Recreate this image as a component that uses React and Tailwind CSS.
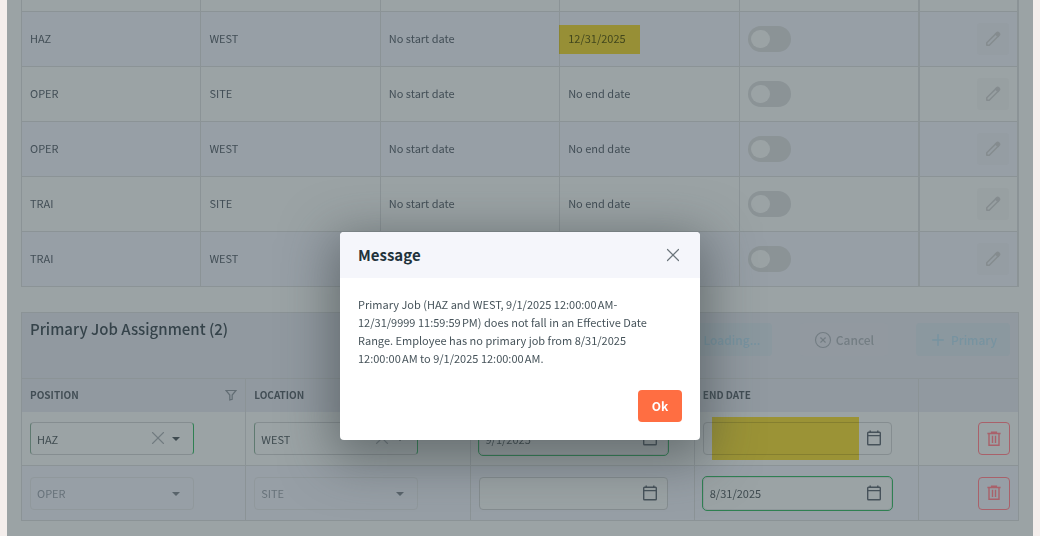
import { X, Plus, CircleX } from 'lucide-react';

const cellFont = "font-['Noto_Sans_CJK_SC','Noto_Sans',sans-serif]";

const jobs = [
  { position: 'HAZ', location: 'WEST', end: '12/31/2025', marked: true },
  { position: 'OPER', location: 'SITE', end: 'No end date' },
  { position: 'OPER', location: 'WEST', end: 'No end date' },
  { position: 'TRAI', location: 'SITE', end: 'No end date' },
  { position: 'TRAI', location: 'WEST', end: 'No end date' },
];

const PencilIcon = () => (
  <svg className="h-4 w-4" viewBox="0 0 16 16" fill="none" stroke="currentColor" strokeWidth="1.5" strokeLinejoin="round">
    <path d="M1.8 14.2v-2.4L11 2.6l2.4 2.4-9.2 9.2z" />
    <path d="M10.6 3l2.4 2.4 1.1-1.1a1.5 1.5 0 0 0 0-2.1l-.3-.3a1.5 1.5 0 0 0-2.1 0z" fill="currentColor" />
  </svg>
);

const CalendarIcon = () => (
  <svg className="h-4 w-4" viewBox="0 0 16 16" fill="none" stroke="currentColor" strokeWidth="1.4">
    <rect x="1.7" y="2.2" width="12.6" height="12.6" rx="0.8" />
    <path d="M1.2 5.6h13.6M4.2 0.4v1.8M11.8 0.4v1.8" />
  </svg>
);

const TrashIcon = () => (
  <svg className="h-4 w-4" viewBox="0 0 16 16" fill="none" stroke="currentColor" strokeWidth="1.4">
    <path d="M1.4 2.5h13.2M5.6 2.2V1.1h4.8v1.1M3 2.8v11.4h10V2.8M6.5 4.8v7.2M9.5 4.8v7.2" />
  </svg>
);

const FilterIcon = () => (
  <svg className="h-3 w-3" viewBox="0 0 12 12" fill="none" stroke="currentColor" strokeWidth="1.2">
    <path d="M1 1.5h10L7.2 6v4.2l-2.4.8V6z" />
  </svg>
);

const Caret = () => (
  <svg className="h-1 w-2" viewBox="0 0 8 4" fill="currentColor">
    <path d="M0 0h8L4 4z" />
  </svg>
);

const Combo = ({ label, value, active }) => (
  <div className="relative w-[164px]">
    <select
      aria-label={label}
      disabled={!active}
      className={
        active
          ? 'block h-[33px] w-full appearance-none rounded border border-y-[#858d90] border-l-[#5f7a70] border-r-[#2f8052] px-1.5 text-[#3f4b50]'
          : 'block h-[33px] w-full appearance-none rounded border border-[#90989c] px-1.5 text-[#67727a] opacity-100'
      }
    >
      <option>{value}</option>
    </select>
    {active && (
      <button aria-label={`Clear ${label}`} className="absolute top-[5px] right-[25px] text-[#717b80]">
        <X className="h-[22px] w-[22px]" strokeWidth={1.2} />
      </button>
    )}
    <span className={active ? 'absolute top-[15px] right-3.5 text-[#3f4b50]' : 'absolute top-[15px] right-3.5 text-[#59646b]'}>
      <Caret />
    </span>
  </div>
);

const DateBox = ({ label, value, active, marked }) => (
  <div className="relative w-[189px]">
    <input
      type="text"
      aria-label={label}
      defaultValue={value}
      className={
        active
          ? 'block h-[33px] w-full rounded border border-[#8f989b] bg-[#9ba3a5] px-1.5 text-[#3f4b50] outline outline-[#2f8052]'
          : 'block h-[33px] w-full rounded border border-[#858d90] bg-[#9ba3a5] px-1.5 text-[#3f4b50]'
      }
    />
    <button aria-label={`Pick ${label}`} className="absolute top-2 right-2.5 text-[#46525a]">
      <CalendarIcon />
    </button>
    {marked && <div className="absolute -top-[5px] left-[9px] h-[43px] w-[147px] bg-[#ffe653] mix-blend-multiply" />}
  </div>
);

const DeleteButton = () => (
  <button aria-label="Delete" className="ml-auto flex h-[33px] w-8 items-center justify-center rounded border border-[#a9616a] text-[#a9616a]">
    <TrashIcon />
  </button>
);

const JobsTable = () => (
  <table className="w-full table-fixed border-separate border-spacing-0">
    <colgroup>
      <col />
      <col />
      <col />
      <col />
      <col />
      <col className="w-[101px]" />
    </colgroup>
    <tbody>
      <tr className="h-3 [&>td]:border-b [&>td]:border-l [&>td]:border-[#8b9396]">
        <td />
        <td />
        <td />
        <td />
        <td />
        <td className="border-r-2 border-l-2!" />
      </tr>
      {jobs.map((job, i) => (
        <tr
          key={i}
          className="h-[55px] even:bg-[#979fa6] [&>td]:border-b [&>td]:border-l [&>td]:border-[#8b9396] [&>td]:px-2"
        >
          <td className="pb-0.5">{job.position}</td>
          <td className="pb-0.5">{job.location}</td>
          <td className="pb-0.5">No start date</td>
          <td className="relative pb-0.5">
            {job.end}
            {job.marked && (
              <div className="absolute top-[13px] -left-px h-[29px] w-[81px] bg-[#ffe653] mix-blend-multiply" />
            )}
          </td>
          <td>
            <input
              type="checkbox"
              aria-label={`Primary ${job.position} ${job.location}`}
              className="block h-[26px] w-[43px] appearance-none rounded-full bg-[#8b9396] p-[3px] pt-1 before:block before:h-[18px] before:w-[19px] before:rounded-full before:bg-[#9ba3a5]"
            />
          </td>
          <td className="border-r-2 border-l-2!">
            <button aria-label="Edit" className="ml-auto flex h-8 w-8 items-center justify-center rounded bg-[#8b9396]/15 text-[#858c8f]">
              <PencilIcon />
            </button>
          </td>
        </tr>
      ))}
    </tbody>
  </table>
);

const PrimaryTable = () => (
  <table className="w-full table-fixed border-separate border-spacing-0">
    <colgroup>
      <col />
      <col />
      <col />
      <col />
      <col className="w-[101px]" />
    </colgroup>
    <thead>
      <tr className="h-[33px] bg-[#9199a0] text-left text-[10px] text-[#424e55] [&>th]:border-l [&>th]:border-[#8b9396] [&>th]:px-2 [&>th]:pb-0.5">
        <th>
          <div className="flex items-center justify-between">
            POSITION
            <span className="text-[#626d74]">
              <FilterIcon />
            </span>
          </div>
        </th>
        <th>LOCATION</th>
        <th>START DATE</th>
        <th>END DATE</th>
        <th className="border-r" />
      </tr>
    </thead>
    <tbody className="[&_td]:border-b [&_td]:border-l [&_td]:border-[#8b9396] [&_td]:px-2 [&_td:last-child]:border-r">
      <tr className="h-[54px]">
        <td><Combo label="Position" value="HAZ" active /></td>
        <td><Combo label="Location" value="WEST" active /></td>
        <td><DateBox label="Start date" value="9/1/2025" active /></td>
        <td><DateBox label="End date" value="" marked /></td>
        <td><DeleteButton /></td>
      </tr>
      <tr className="h-[55px] bg-[#979fa6]">
        <td><Combo label="Position" value="OPER" /></td>
        <td><Combo label="Location" value="SITE" /></td>
        <td><DateBox label="Start date" value="" /></td>
        <td><DateBox label="End date" value="8/31/2025" active /></td>
        <td><DeleteButton /></td>
      </tr>
    </tbody>
  </table>
);

const MessageDialog = () => (
  <div className="fixed inset-0 flex items-start justify-center pt-[232px]">
    <div
      role="dialog"
      aria-labelledby="message-title"
      className="w-[360px] overflow-hidden rounded bg-white shadow-[0_12px_50px_8px_rgba(50,58,60,0.5)]"
    >
      <div className="flex h-[46px] items-center justify-between bg-[#f5f6fb] px-[18px]">
        <h2 id="message-title" className="text-[15px] font-bold text-[#22333b]">Message</h2>
        <button aria-label="Close" className="-mr-0.5 text-[#6b757b]">
          <X className="h-[22px] w-[22px]" strokeWidth={1.3} />
        </button>
      </div>
      <p className="px-[18px] pt-[17px] leading-[18px] text-[#46535a]">
        Primary Job (HAZ and WEST, 9/1/2025 12:00:00&#8239;AM-
        <br />
        12/31/9999 11:59:59&#8239;PM) does not fall in an Effective Date
        <br />
        Range. Employee has no primary job from 8/31/2025
        <br />
        12:00:00&#8239;AM to 9/1/2025 12:00:00&#8239;AM.
      </p>
      <div className="flex justify-end px-[18px] pt-[23px] pb-[18px]">
        <button className="h-8 w-11 rounded bg-[#ff6e42] text-xs font-bold text-white">Ok</button>
      </div>
    </div>
  </div>
);

export default function App() {
  return (
    <div className={`min-h-screen bg-[#f4eeec] px-[7px] text-[11px] leading-4 text-[#424e56] ${cellFont}`}>
      <main className="min-h-screen bg-[#9ba3a5] px-3.5">
        <JobsTable />
        <section className="mt-[25px]">
          <header className="flex h-[67px] items-start justify-between border border-[#8b9396] bg-[#9199a0] px-2">
            <h1 className="pt-1 text-[15px] leading-6 font-medium text-[#35434a]">Primary Job Assignment (2)</h1>
            <div className="flex gap-7 pt-2.5 text-xs font-medium">
              <button className="h-[33px] w-20 rounded bg-[#8b989f] text-[#7793a0]">Loading...</button>
              <button className="flex h-[33px] w-[88px] items-center justify-center gap-1 rounded bg-[#9299a0] text-[#737d83]">
                <CircleX className="h-[18px] w-[18px]" strokeWidth={1.5} />
                Cancel
              </button>
              <button className="flex h-[33px] w-[94px] items-center justify-center gap-1 rounded bg-[#8b989f] text-[#7793a0]">
                <Plus className="h-[18px] w-[18px]" />
                Primary
              </button>
            </div>
          </header>
          <PrimaryTable />
        </section>
      </main>
      <MessageDialog />
    </div>
  );
}
